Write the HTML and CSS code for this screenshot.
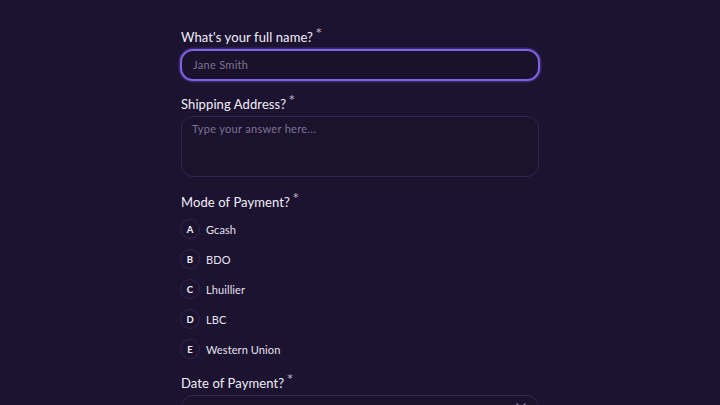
FILE: index.html
```html
<!DOCTYPE html>
<html>
<head>
<meta charset="utf-8">
<link rel="stylesheet" href="styles.css">
</head>
<body>
<main class="form">
  <section class="field">
    <label class="label">What's your full name?<span class="req">*</span></label>
    <div class="input focused"><span class="placeholder">Jane Smith</span></div>
  </section>
  <section class="field">
    <label class="label">Shipping Address?<span class="req">*</span></label>
    <div class="textarea"><span class="placeholder">Type your answer here...</span></div>
  </section>
  <section class="field">
    <label class="label">Mode of Payment?<span class="req">*</span></label>
    <ul class="options">
      <li class="option"><span class="key">A</span><span class="opt-text">Gcash</span></li>
      <li class="option"><span class="key">B</span><span class="opt-text">BDO</span></li>
      <li class="option"><span class="key">C</span><span class="opt-text">Lhuillier</span></li>
      <li class="option"><span class="key">D</span><span class="opt-text">LBC</span></li>
      <li class="option"><span class="key">E</span><span class="opt-text">Western Union</span></li>
    </ul>
  </section>
  <section class="field">
    <label class="label">Date of Payment?<span class="req">*</span></label>
    <div class="select">
      <svg class="chev" width="10" height="6" viewBox="0 0 10 6"><path d="M1 1l4 4 4-4" fill="none" stroke="#8f86a8" stroke-width="1.4" stroke-linecap="round" stroke-linejoin="round"/></svg>
    </div>
  </section>
</main>
</body>
</html>
```

FILE: styles.css
```css
html, body {
  margin: 0;
  padding: 0;
  background: #1c1331;
  height: 100%;
  overflow: hidden;
}
body {
  font-family: "Lato", "Liberation Sans", sans-serif;
  color: #ece8f4;
}
.form {
  width: 358px;
  margin-left: 181px;
  padding-top: 28px;
  display: flex;
  flex-direction: column;
}
.field {
  display: flex;
  flex-direction: column;
}
.label {
  font-size: 13px;
  line-height: 18px;
  height: 18px;
  color: #f1eef7;
  letter-spacing: 0.1px;
  margin-bottom: 3px;
}
.req {
  font-family: "DejaVu Sans", sans-serif;
  font-size: 11px;
  line-height: 1;
  vertical-align: top;
  color: #c4bfd0;
  position: relative;
  top: -1px;
  margin-left: 3px;
}
.placeholder {
  font-size: 11px;
  line-height: 14px;
  color: #7d7494;
  letter-spacing: 0.3px;
}
.input {
  height: 28px;
  border-radius: 13px;
  display: flex;
  align-items: center;
  padding: 0 11px;
  background: #1a112c;
}
.input.focused {
  border: 2px solid #7e62e4;
  box-shadow: 0 0 0 1.5px rgba(110, 80, 210, 0.35);
  margin: 0 -1px;
}
.field:first-child { margin-bottom: 14px; }
.textarea {
  border: 1px solid #2f2650;
  border-radius: 12px;
  background: #1b122e;
  padding: 5px 10px;
  box-sizing: border-box;
  height: 61px;
  margin-bottom: 16px;
  display: flex;
  align-items: flex-start;
}
.options {
  list-style: none;
  margin: 5px 0 15px;
  padding: 0;
  display: flex;
  flex-direction: column;
  gap: 10px;
}
.option {
  display: flex;
  align-items: center;
  height: 20px;
  margin-left: -1px;
}
.key {
  width: 18px;
  height: 18px;
  border-radius: 50%;
  border: 1px solid #2e2549;
  display: flex;
  align-items: center;
  justify-content: center;
  font-size: 9.5px;
  font-weight: 700;
  color: #f3f0f8;
  margin-right: 6px;
}
.opt-text {
  font-size: 11px;
  color: #e6e1ef;
  letter-spacing: 0.1px;
}
.select {
  height: 32px;
  border: 1px solid #2f2650;
  border-radius: 12px;
  background: #1b122e;
  display: flex;
  justify-content: flex-end;
  align-items: center;
  padding-right: 12px;
}
.chev { margin-bottom: 12px; }
```
